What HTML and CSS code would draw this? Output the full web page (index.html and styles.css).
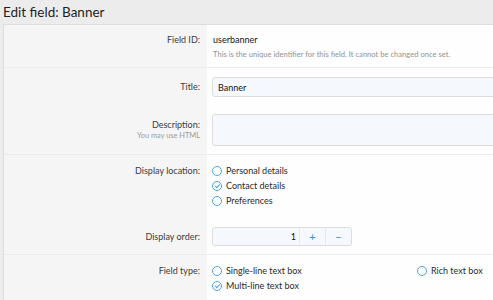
FILE: index.html
```html
<!DOCTYPE html>
<html lang="en">
<head>
  <meta charset="UTF-8">
  <title>Edit field: Banner</title>
  <link rel="stylesheet" href="styles.css">
</head>
<body>
  <h1 class="page-title">Edit field: Banner</h1>
  <div class="block">
    <div class="form-row">
      <div class="row-label"><span class="label">Field ID:</span></div>
      <div class="row-value">
        <div class="plain">userbanner</div>
        <div class="explain">This is the unique identifier for this field. It cannot be changed once set.</div>
      </div>
    </div>
    <div class="form-row sep">
      <div class="row-label"><span class="label label-input">Title:</span></div>
      <div class="row-value">
        <input class="input" type="text" value="Banner">
      </div>
    </div>
    <div class="form-row">
      <div class="row-label">
        <span class="label label-area">Description:</span>
        <span class="label-hint">You may use HTML</span>
      </div>
      <div class="row-value">
        <textarea class="input textarea"></textarea>
      </div>
    </div>
    <div class="form-row sep">
      <div class="row-label"><span class="label label-radio">Display location:</span></div>
      <div class="row-value">
        <ul class="choices">
          <li><span class="radio"></span>Personal details</li>
          <li><span class="radio checked"></span>Contact details</li>
          <li><span class="radio"></span>Preferences</li>
        </ul>
      </div>
    </div>
    <div class="form-row">
      <div class="row-label"><span class="label label-number">Display order:</span></div>
      <div class="row-value">
        <div class="number-box">
          <input class="number-input" type="text" value="1">
          <button class="number-btn" type="button">+</button>
          <button class="number-btn" type="button">&minus;</button>
        </div>
      </div>
    </div>
    <div class="form-row sep">
      <div class="row-label"><span class="label label-radio">Field type:</span></div>
      <div class="row-value">
        <ul class="choices choices-cols">
          <li><span class="radio"></span>Single-line text box</li>
          <li><span class="radio"></span>Rich text box</li>
          <li><span class="radio checked"></span>Multi-line text box</li>
        </ul>
      </div>
    </div>
  </div>
</body>
</html>
```

FILE: styles.css
```css
body {
  margin: 0;
  background: #ececec;
  color: #141414;
  font-family: Lato, "Liberation Sans", sans-serif;
  font-size: 9px;
  overflow: hidden;
}
.page-title {
  margin: 0;
  padding: 2px 3px 0;
  height: 22px;
  font-size: 13.5px;
  font-weight: normal;
  line-height: 20px;
  color: #1e1e1e;
}
.block {
  margin-left: 3px;
  width: 620px;
  border: 1px solid #dedede;
  background: #fefefe;
}
.form-row {
  display: grid;
  grid-template-columns: 203px 1fr;
}
.form-row.sep {
  border-top: 1px solid #ebebeb;
}
.row-label {
  background: #f5f5f5;
  text-align: right;
  padding: 8px 7px 8px 0;
  display: flex;
  flex-direction: column;
  align-items: flex-end;
  color: #3c3c3c;
}
.row-value {
  padding: 8px 0 8px 5px;
}
.label {
  line-height: 13px;
}
.label-input {
  line-height: 20px;
  margin-top: 1px;
}
.label-area {
  margin-top: 5px;
}
.label-number {
  line-height: 19px;
  margin-top: 3px;
}
.label-radio {
  line-height: 15px;
}
.label-hint {
  font-size: 7.4px;
  color: #9a9a9a;
  line-height: 10px;
}
.plain {
  line-height: 13px;
  padding-left: 1px;
}
.explain {
  margin-top: 3px;
  font-size: 7.6px;
  color: #939393;
  line-height: 10px;
  padding-left: 1px;
}
.input {
  display: block;
  box-sizing: border-box;
  width: 100%;
  height: 20px;
  margin: 1px 0 0;
  padding: 0 5px;
  border: 1px solid #dcdcdc;
  border-radius: 3px;
  background: #f5f9fd;
  font-family: inherit;
  font-size: 9px;
  color: #141414;
}
.textarea {
  height: 32px;
  resize: none;
}
.choices {
  list-style: none;
  margin: 0;
  padding: 0;
}
.choices li {
  display: flex;
  align-items: center;
  line-height: 15px;
  color: #2a2a2a;
}
.choices-cols {
  display: grid;
  grid-template-columns: 205px 1fr;
}
.radio {
  width: 8px;
  height: 8px;
  border: 1px solid #4fa3e0;
  border-radius: 50%;
  margin: 0 4px 0 0;
  position: relative;
  background: #fff;
}
.radio.checked::after {
  content: "";
  position: absolute;
  left: 2.5px;
  top: 1px;
  width: 2px;
  height: 4px;
  border: solid #4fa3e0;
  border-width: 0 1px 1px 0;
  transform: rotate(45deg);
}
.number-box {
  display: flex;
  width: 140px;
  height: 19px;
  margin-top: 3px;
  border: 1px solid #dcdcdc;
  border-radius: 3px;
  background: #f5f9fd;
  box-sizing: border-box;
}
.number-input {
  flex: 1;
  min-width: 0;
  border: none;
  background: transparent;
  text-align: right;
  padding: 0 3px;
  font-family: inherit;
  font-size: 9px;
  color: #141414;
}
.number-btn {
  width: 26px;
  border: none;
  border-left: 1px solid #e4e8ec;
  background: transparent;
  color: #3f8fd0;
  font-size: 11px;
  padding: 0;
  font-family: inherit;
}
```
